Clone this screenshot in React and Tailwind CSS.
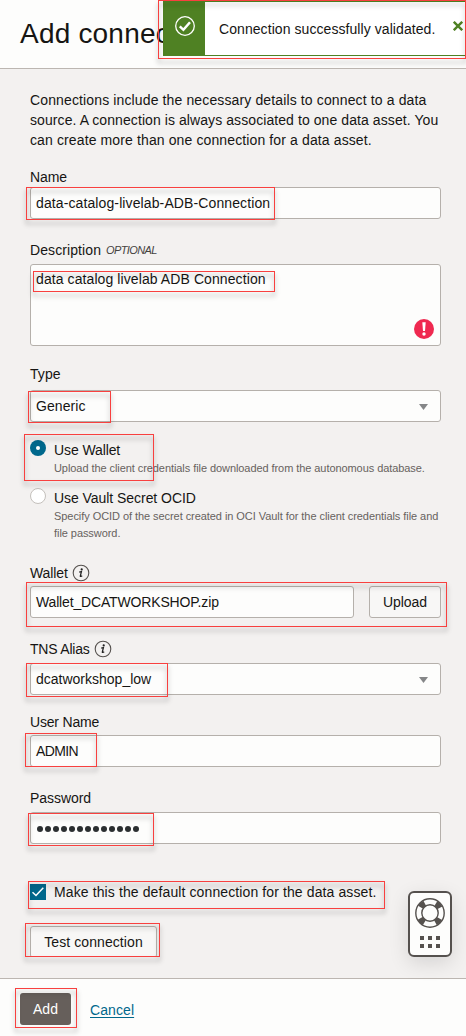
import React from "react";

function Highlight({ className }) {
  return (
    <div
      className={`pointer-events-none absolute z-10 border border-[#f8403f] drop-shadow-[0px_4px_2.5px_rgba(0,0,0,0.4)] ${className}`}
    />
  );
}

function InfoIcon() {
  return (
    <svg className="ml-[4px] h-[18px] w-[18px]" viewBox="0 0 18 18">
      <circle cx="9" cy="9" r="7.8" fill="none" stroke="#55514e" strokeWidth="1.1" />
      <circle cx="9.7" cy="5.4" r="1.1" fill="#222" />
      <path d="M7.2 8.2 L9.4 7.7 L8.3 12.2 Q8.4 12.9 10.2 11.7" fill="none" stroke="#222" strokeWidth="1.3" />
    </svg>
  );
}

function Label({ children, className = "" }) {
  return <div className={`flex h-5 items-center ${className}`}>{children}</div>;
}

function Field({ children, className = "" }) {
  return (
    <div className={`relative flex h-8 w-full items-center rounded-[3px] border border-[#b5b0ab] bg-[#fdfdfc] pl-[5px] ${className}`}>
      {children}
    </div>
  );
}

function Arrow() {
  return (
    <svg className="mt-px mr-3 ml-auto h-[6px] w-[9px]" viewBox="0 0 9 6">
      <path d="M0 0H9L4.5 6Z" fill="#858688" />
    </svg>
  );
}

function Toast() {
  return (
    <div className="absolute top-0 left-[158px] h-[59px] w-[308px]">
      <div className="mt-px ml-[5px] flex h-[55px] border-y border-[#4f8123] bg-white">
        <div className="flex w-[42px] shrink-0 justify-center bg-[#4f8123] pt-[14px]">
          <svg className="ml-[2px] h-[20px] w-[20px]" viewBox="0 0 20 20" fill="none" stroke="#fff">
            <circle cx="10" cy="10" r="9.3" strokeWidth="1.3" />
            <path d="M4.8 10.3 L8.4 13.8 L15 6.2" strokeWidth="2.5" />
          </svg>
        </div>
        <span className="mt-[17px] ml-[14px] h-5 w-[219px] shrink-0 text-[14px] leading-5 tracking-[0.07px]">
          Connection successfully validated.
        </span>
        <svg className="mt-[19px] ml-[15px] h-[10px] w-[10px] shrink-0" viewBox="0 0 10 10">
          <path d="M0.8 0.8L9.2 9.2M9.2 0.8L0.8 9.2" stroke="#4f8123" strokeWidth="2.4" />
        </svg>
      </div>
      <Highlight className="inset-0" />
    </div>
  );
}

function HelpWidget() {
  return (
    <div className="absolute top-[822px] left-[408px] flex h-[66px] w-[44px] flex-col items-center rounded-[6px] border-2 border-[#55514e] bg-[#fdfdfc] pt-[5px] shadow-[0_6px_20px_rgba(0,0,0,0.12)]">
      <svg className="h-[30px] w-[30px]" viewBox="0 0 30 30" fill="none" stroke="#55514e">
        <circle cx="15" cy="15" r="14.2" strokeWidth="1.4" />
        <circle cx="15" cy="15" r="11" strokeWidth="6" strokeDasharray="5.8 11.479" strokeDashoffset="-5.74" />
        <circle cx="15" cy="15" r="8.2" strokeWidth="1.4" />
      </svg>
      <div className="mt-2 grid grid-cols-3 gap-1">
        {[0, 1, 2, 3, 4, 5].map((n) => (
          <span key={n} className="h-1 w-1 bg-[#55514e]" />
        ))}
      </div>
    </div>
  );
}

export default function App() {
  return (
    <div className="relative flex h-[1036px] w-[466px] flex-col overflow-hidden bg-[#f3f1f0] font-['Liberation_Sans',Arial,sans-serif] text-[14px] leading-5 tracking-[0.09px] text-[#161513]">
      <header className="h-[69px] shrink-0 border-b border-[#bcb6b1] bg-[#fdfdfc] pl-5">
        <h1 className="pt-[14px] text-[28px] leading-[40px] tracking-[0.2px] whitespace-nowrap">Add connection</h1>
      </header>
      <Toast />

      <main className="relative h-[909px] shrink-0 pt-[21px] pr-[25px] pl-[30px]">
        <p className="h-[60px] tracking-[0.12px] whitespace-nowrap">
          <span className="tracking-[0.13px]">Connections include the necessary details to connect to a data</span>
          <br />
          <span className="tracking-[0.08px]">source. A connection is always associated to one data asset. You</span>
          <br />
          can create more than one connection for a data asset.
        </p>

        <Label className="mt-[17px] tracking-[-0.1px]">Name</Label>
        <Field className="tracking-[0.11px]">
          data-catalog-livelab-ADB-Connection
          <Highlight className="-top-px -left-[5px] h-[33px] w-[249px]" />
        </Field>

        <Label className="mt-[21px]">
          Description <span className="ml-[5px] text-[11px] tracking-[-0.6px] text-[#45423f] italic">OPTIONAL</span>
        </Label>
        <div className="relative mt-1 h-[82px] rounded-[3px] border border-[#b5b0ab] bg-[#fdfdfc] pt-1 pl-[5px]">
          data catalog livelab ADB Connection
          <svg className="absolute right-[6px] bottom-[6px] h-5 w-5" viewBox="0 0 20 20">
            <circle cx="10" cy="10" r="10" fill="#ef2950" />
            <path d="M8.3 3.2H11.7L11 12H9Z" fill="#fff" />
            <circle cx="10" cy="15" r="1.7" fill="#fff" />
          </svg>
          <Highlight className="top-[6px] left-[2px] h-[21px] w-[242px]" />
        </div>

        <Label className="mt-[18px]">Type</Label>
        <Field className="mt-[6px]">
          Generic
          <Arrow />
          <Highlight className="top-0 -left-[3px] h-[32px] w-[83px]" />
        </Field>

        <div className="relative mt-[18px] flex">
          <span className="flex h-4 w-4 shrink-0 items-center justify-center rounded-full bg-[#00688c]">
            <span className="h-1 w-1 rounded-full bg-white" />
          </span>
          <div className="ml-2">
            <div className="tracking-[-0.1px]">Use Wallet</div>
            <div className="text-[11px] leading-[17px] tracking-[-0.07px] whitespace-nowrap text-[#67625e]">
              Upload the client credentials file downloaded from the autonomous database.
            </div>
          </div>
          <Highlight className="-top-[6px] -left-[6px] h-[47px] w-[130px]" />
        </div>
        <div className="mt-[11px] flex">
          <span className="h-4 w-4 shrink-0 rounded-full border border-[#c4c0bc] bg-white" />
          <div className="ml-2">
            <div className="tracking-[-0.05px]">Use Vault Secret OCID</div>
            <div className="text-[11px] leading-[17px] tracking-[-0.06px] whitespace-nowrap text-[#67625e]">
              Specify OCID of the secret created in OCI Vault for the client credentials file and
              <br />
              file password.
            </div>
          </div>
        </div>

        <Label className="mt-[21px] tracking-[-0.12px]">
          Wallet <InfoIcon />
        </Label>
        <div className="relative mt-[3px] flex gap-[15px]">
          <Field className="flex-1 tracking-[-0.16px]">Wallet_DCATWORKSHOP.zip</Field>
          <button className="h-8 w-[72px] rounded-[3px] border border-[#b5b0ab] bg-[#f8f7f6] tracking-[-0.1px]">Upload</button>
          <Highlight className="-top-1 -left-1 h-[45px] w-[421px]" />
        </div>

        <Label className="mt-[21px] tracking-[-0.2px]">
          TNS Alias <InfoIcon />
        </Label>
        <Field className="mt-1 tracking-[0px]">
          dcatworkshop_low
          <Arrow />
          <Highlight className="-top-px -left-[5px] h-[34px] w-[142px]" />
        </Field>

        <Label className="mt-[17px] tracking-[-0.18px]">User Name</Label>
        <Field className="mt-[3px] tracking-[-0.6px]">
          ADMIN
          <Highlight className="-top-[3px] -left-[6px] h-[34px] w-[72px]" />
        </Field>

        <Label className="mt-[21px] tracking-[-0.06px]">Password</Label>
        <Field className="mt-1">
          <span className="mt-[2px] flex gap-[2px] pl-px">
            {Array.from({ length: 13 }, (_, i) => (
              <span key={i} className="h-[6px] w-[6px] rounded-full bg-[#2b2f31]" />
            ))}
          </span>
          <Highlight className="top-0 -left-[3px] h-[33px] w-[126px]" />
        </Field>

        <div className="relative mt-[38px] flex h-5 items-center">
          <svg className="h-4 w-4 shrink-0" viewBox="0 0 16 16">
            <rect width="16" height="16" fill="#00688c" />
            <path d="M2.5 8.2L6 11.5L13.3 3.7" fill="none" stroke="#fff" strokeWidth="1.5" />
          </svg>
          <span className="ml-2 tracking-[0.11px]">Make this the default connection for the data asset.</span>
          <Highlight className="-top-px -left-[2px] h-[28px] w-[357px]" />
        </div>

        <div className="relative mt-6 h-[31px] w-[127px]">
          <div className="h-[31px] overflow-hidden">
            <button className="h-8 w-[127px] rounded-[3px] border border-[#b5b0ab] bg-[#f8f7f6]">Test connection</button>
          </div>
          <Highlight className="-top-[3px] -left-[5px] h-[34px] w-[135px]" />
        </div>
        <HelpWidget />
      </main>

      <footer className="flex h-[58px] shrink-0 border-t border-[#bcb6b1] bg-[#fdfdfc] pt-[14px] pl-5">
        <div className="relative h-8 w-[51px]">
          <button className="h-8 w-[51px] rounded-[3px] bg-[#665f5b] text-white">Add</button>
          <Highlight className="-top-[5px] -left-[5px] h-[40px] w-[62px]" />
        </div>
        <a className="mt-[7px] ml-[19px] text-[#00688c] underline underline-offset-2">Cancel</a>
      </footer>
    </div>
  );
}
